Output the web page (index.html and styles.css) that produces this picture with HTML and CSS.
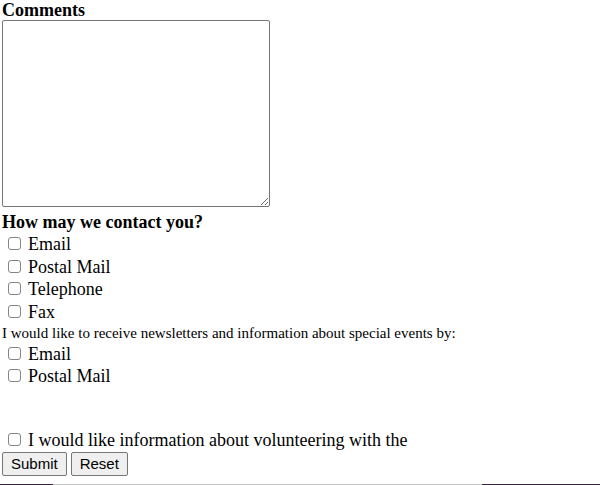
FILE: index.html
```html
<!DOCTYPE html>
<html>
<head>
<meta charset="utf-8">
<title>Contact form</title>
<link rel="stylesheet" href="styles.css">
</head>
<body>
<form class="form">
  <div class="heading">Comments</div>
  <textarea class="comments"></textarea>
  <div class="heading heading-contact">How may we contact you?</div>
  <div class="options">
    <label class="opt"><input type="checkbox" class="cb"><span>Email</span></label>
    <label class="opt"><input type="checkbox" class="cb"><span>Postal Mail</span></label>
    <label class="opt"><input type="checkbox" class="cb"><span>Telephone</span></label>
    <label class="opt"><input type="checkbox" class="cb"><span>Fax</span></label>
  </div>
  <div class="note">I would like to receive newsletters and information about special events by:</div>
  <div class="options">
    <label class="opt"><input type="checkbox" class="cb"><span>Email</span></label>
    <label class="opt"><input type="checkbox" class="cb"><span>Postal Mail</span></label>
  </div>
  <div class="options options-volunteer">
    <label class="opt"><input type="checkbox" class="cb"><span>I would like information about volunteering with the</span></label>
  </div>
  <div class="actions">
    <button type="submit" class="btn">Submit</button>
    <button type="reset" class="btn">Reset</button>
  </div>
</form>
<div class="bottom-bar">
  <div class="seg seg-dark seg-left"></div>
  <div class="seg seg-light"></div>
  <div class="seg seg-dark seg-right"></div>
</div>
</body>
</html>
```
FILE: styles.css
```css
html, body {
  margin: 0;
  padding: 0;
  background: #ffffff;
}
body {
  font-family: "Liberation Serif", "Times New Roman", serif;
  color: #000000;
  overflow: hidden;
}
.form {
  padding-left: 2px;
}
.heading {
  font-size: 18px;
  font-weight: bold;
  line-height: 20px;
}
.heading-contact {
  line-height: 21px;
}
.comments {
  display: block;
  box-sizing: border-box;
  width: 268px;
  height: 187px;
  margin: 0 0 5px 0;
  border: 1px solid #767676;
  border-radius: 2px;
  padding: 2px;
  resize: both;
}
.options {
  display: flex;
  flex-direction: column;
}
.opt {
  display: flex;
  align-items: center;
  height: 22.7px;
  font-size: 18px;
  line-height: 22.7px;
}
.cb {
  -webkit-appearance: none;
  appearance: none;
  box-sizing: border-box;
  flex: none;
  width: 13px;
  height: 13px;
  margin: 0 7px 0 6px;
  border: 1px solid #858585;
  border-radius: 3px;
  background: #ffffff;
  position: relative;
  top: -1px;
}
.note {
  font-size: 15px;
  line-height: 19px;
}
.options-volunteer {
  margin-top: 41px;
}
.actions {
  display: flex;
  gap: 4px;
  margin-top: 0;
}
.btn {
  font-family: "Liberation Sans", Arial, sans-serif;
  font-size: 15px;
  height: 24px;
  padding: 0 8px;
  margin: 0;
  border: 1px solid #767676;
  border-radius: 2px;
  background: #efefef;
  color: #000000;
}
.bottom-bar {
  display: flex;
  height: 2px;
  margin-top: 8px;
}
.seg-dark {
  background: #3a2440;
}
.seg-left {
  width: 53px;
}
.seg-light {
  flex: 1;
  background: #c3c3c3;
}
.seg-right {
  width: 118px;
}
```
